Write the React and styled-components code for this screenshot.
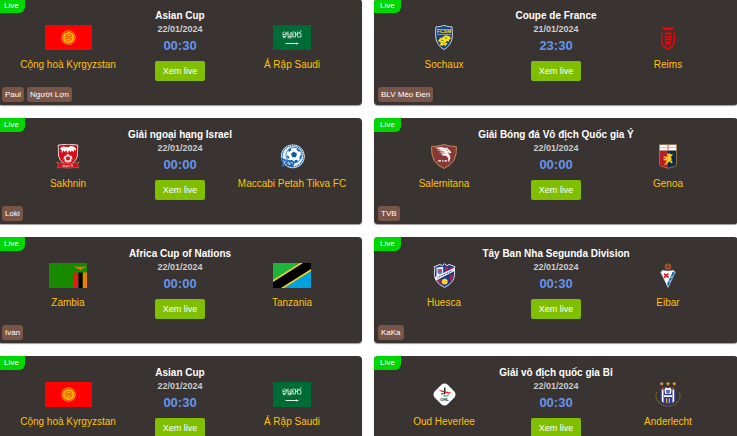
import styled, { createGlobalStyle } from "styled-components"

const GlobalStyle = createGlobalStyle`
  body {
    margin: 0;
    background: #fff;
    font-family: "Liberation Sans", Arial, sans-serif;
    overflow-x: hidden;
    scrollbar-width: none;
  }
`

const MatchGrid = styled.main`
  display: grid;
  grid-template-columns: repeat(2, minmax(0, 1fr));
  column-gap: 12px;
  row-gap: 13px;
  margin: -1px -1px 0 -2px;
`

const Card = styled.article`
  position: relative;
  display: flex;
  flex-direction: column;
  padding-bottom: 3px;
  border-radius: 4px;
  background: #393331;
  box-shadow: 0 1px 1px rgba(0, 0, 0, 0.4);
  overflow: hidden;
`

const LiveBadge = styled.span`
  position: absolute;
  top: 0;
  left: 0;
  padding: 0 6px;
  border-bottom-right-radius: 6px;
  background: #00d600;
  color: #fff;
  font-size: 8px;
  line-height: 14px;
`

const CardBody = styled.div`
  display: grid;
  grid-template-columns: repeat(3, minmax(0, 1fr));
  padding: 11px 14px 0;
`

const TeamBox = styled.div`
  display: flex;
  flex-direction: column;
  align-items: center;
  gap: 8px;
  padding-top: 15px;

  & svg {
    display: block;
    height: 25px;
  }
`

const TeamName = styled.span`
  color: #ffc107;
  font-size: 10px;
  line-height: 14px;
  white-space: nowrap;
`

const Info = styled.div`
  display: flex;
  flex-direction: column;
  align-items: center;
  white-space: nowrap;
  font-weight: bold;
`

const League = styled.h2`
  margin: 0;
  color: #fff;
  font-size: 10px;
  line-height: 12px;
`

const MatchDate = styled.span`
  color: #ccc;
  font-size: 9px;
  line-height: 15px;
`

const Kickoff = styled.span`
  color: #6495ed;
  font-size: 13px;
  line-height: 18px;
`

const WatchButton = styled.button`
  margin-top: 6px;
  padding: 0 8px;
  border: none;
  border-radius: 2px;
  background: #7fbf00;
  color: #fff;
  font-family: inherit;
  font-size: 9px;
  line-height: 20px;
  cursor: pointer;
`

const Tags = styled.div`
  display: flex;
  gap: 3px;
  padding: 6px 4px 0;
`

const Tag = styled.span`
  padding: 0 3px;
  border-radius: 3px;
  background: #795548;
  color: #fff;
  font-size: 8px;
  line-height: 15px;
`

const Kyrgyzstan = () => (
  <svg width="47" viewBox="0 0 47 25">
    <rect width="47" height="25" fill="#f00" />
    <circle cx="23.5" cy="12.5" r="6.6" fill="none" stroke="#ff8c00" strokeWidth="1.6" strokeDasharray="1.2 0.4" />
    <circle cx="23.5" cy="12.5" r="5.6" fill="#ffc400" />
    <circle cx="23.5" cy="12.5" r="3.6" fill="#ffa000" stroke="#f85a00" strokeWidth="0.8" />
    <path d="M20.8 11q2.7 1 5.4 3M26.2 11q-2.7 1-5.4 3" fill="none" stroke="#f33a00" strokeWidth="0.8" />
  </svg>
)

const SaudiArabia = () => (
  <svg width="38" viewBox="0 0 38 25">
    <rect width="38" height="25" fill="#006c35" />
    <g fill="none" stroke="#e4f0e9" strokeWidth="0.8">
      <path d="M10 7v4.5h3V8M11.5 6.5l2 3M15 6.5v5h3V7M16 9l3 3.5M20 6.5v5.5h2.5V7M21 6.5l2 2M24.5 6.5v5.5M26 7l2 1.5v3.5h-3M27 6h1.5M10 12.5l2.5.3M14.5 12.8h4M10 9.5h2M13.5 7l1.5 2M18 7.5l2 3M22.5 9.5h2M24.5 8h3" />
      <path d="M12.5 18.5h13" strokeWidth="1" />
      <path d="M23.5 17.5v2" />
    </g>
  </svg>
)

const Zambia = () => (
  <svg width="38" viewBox="0 0 38 25">
    <rect width="38" height="25" fill="#198a00" />
    <path d="M25 9.5h4.5V25H25z" fill="#de2010" />
    <path d="M29.5 9.5h4.3V25h-4.3z" fill="#000" />
    <path d="M33.8 9.5H38V25h-4.2z" fill="#ef7d00" />
    <path d="M25 2.8l4.8 1.4 1.5-1 1.2 1L37.5 3l-2.6 2.3-2 .2-1 2-1.2-1.4-1.8-.1z" fill="#ef7d00" />
  </svg>
)

const Tanzania = () => (
  <svg width="38" viewBox="0 0 38 25">
    <path d="M0 0h38L0 25z" fill="#1eb53a" />
    <path d="M38 0v25H0z" fill="#00a3dd" />
    <path d="M0 25v-8L27 0h11v8L11 25z" fill="#fcd116" />
    <path d="M0 25v-6L30 0h8v6L8 25z" fill="#000" />
  </svg>
)

const Sochaux = () => (
  <svg width="18" viewBox="0 0 18 25">
    <path d="M1 1.8Q5 2 9 .4q4 1.6 8 1.4.8 5.2.2 11.2Q16 20.5 9 24.6 2 20.5.8 13 .2 7 1 1.8z" fill="#174489" stroke="#f2f5fa" strokeWidth="0.8" />
    <text x="9" y="8" textAnchor="middle" fontSize="5" fontWeight="bold" fill="#ffe014">FCSM</text>
    <path d="M2 9.5h14" stroke="#dfe6f2" strokeWidth="0.5" />
    <path d="M3 16l2.2-3 2.5-.5 1-1.5 2.8-.7 3.4 1.2 1 2.2-1.8 1-.2 2-1.8-.6-2 1.4 2.4.8-2 2.8-2-1.4-2 1.4-2-1.8 2-1.6-1.8-.6z" fill="#ffe014" />
    <path d="M6 15l2.5 1M10 12.5l2 .8M8 18l1.5.6" stroke="#174489" strokeWidth="0.7" />
  </svg>
)

const Reims = () => (
  <svg width="14" viewBox="0 0 14 25">
    <g fill="none" stroke="#f50008">
      <path d="M.8 7.5V17c0 3.5 3 5.4 6.2 7 3.2-1.6 6.2-3.5 6.2-7V7.5" strokeWidth="1.5" />
      <path d="M9.8 10.2V8.2H4.6v3.6h5v2.6" strokeWidth="1.5" />
      <path d="M4.8 20.5v-6.2h4.7v2.6H5.5l4.3 3.8" strokeWidth="1.5" />
    </g>
    <path d="M2.6 5.4L1 1.2 4.4 3.2 5.2 1.2 7 3 8.8 1.2l.8 2L13 1.2l-1.6 4.2Q7 4.3 2.6 5.4z" fill="#f50008" />
  </svg>
)

const Sakhnin = () => (
  <svg width="24" viewBox="0 0 24 25">
    <path d="M2.2 1Q12-.6 21.8 1L21.4 12Q20 18 12 22 4 18 2.6 12z" fill="#d50d13" stroke="#fff" strokeWidth="0.8" />
    <path d="M4 4.5Q6 1.8 9 2.8t6-.8q4 .2 5.3 3.3l-.6 1.5-1.5-1.2-.6 3-1.7-2.3-1.2 2-1.7-2-1.2 3-1.7-3-1.4 1.6-1.5-1.6L6 9.5 5.5 6.3z" fill="#fff" />
    <circle cx="12" cy="14.5" r="4.4" fill="#f7dada" />
    <path d="M12 12.2l2.2 1.6-.8 2.5h-2.8l-.8-2.5zM9 10.7l2-.7-.2 1.2-1.6 1zM15 10.7l-2-.7.2 1.2 1.6 1zM7.7 15l1.4.8-.1 1.5zM16.3 15l-1.4.8.1 1.5zM10.6 18h2.8l-1.4 1z" fill="#d50d13" />
    <path d="M.7 18l3.8.7q7.5 1.6 15 0l3.8-.7-1.7 3 1.3 3-3.6-.4q-7.3 1.2-14.6 0L1.1 24l1.3-3z" fill="#cf1015" stroke="#e58f91" strokeWidth="0.4" />
    <path d="M7 20.7v1.8h1.4v-1.6M10 21v1.8h1.4V21M13 20.8v2M15 22.7v-1.8h1.5v1.6" fill="none" stroke="#fff" strokeWidth="0.6" />
  </svg>
)

const Maccabi = () => (
  <svg width="25" viewBox="0 0 25 25">
    <circle cx="12.8" cy="12.3" r="11.9" fill="#eaf3fb" />
    <circle cx="12.8" cy="12.3" r="10.6" fill="none" stroke="#1c70bd" strokeWidth="1.3" strokeDasharray="1.3 0.6" />
    <circle cx="13.8" cy="11.2" r="7.8" fill="#fff" stroke="#1965b3" strokeWidth="0.8" />
    <path d="M13.6 7.6l3.3 2-.8 3.7h-3.7l-1.5-3.2zM8 6.2l2.8-2.1.7 1.6-2.2 2.4zM17 4.2l3 2.2-.7 1.5-2.7-1.8zM20.3 11.4l1.4-.8-.8 4-1.8.2zM14.6 16.3l2.7-.5.5 1.7-3 1.4zM7 11.3l2 1.2.3 2.2-2-.6z" fill="#0d5bab" />
    <path d="M.8 13.5l7 2.7 4.2-.2 3 2-2 5.2-5-1.3-7.2.6 1.8-3z" fill="#1b67b4" />
    <path d="M3 16.3l2 3M6 16.5l-2.5 4M7 19l2-1v3l2-2.5 2 .8M5 21l2-.6" fill="none" stroke="#dcecfa" strokeWidth="0.8" />
  </svg>
)

const Salernitana = () => (
  <svg width="26" viewBox="0 0 26 25">
    <path d="M.6 2.6Q7 2.4 13 .6q6 1.8 12.4 2Q26 10 23 16.2 19.7 21.6 13 24.5 6.3 21.6 3 16.2 0 10 .6 2.6z" fill="#873735" stroke="#c69555" strokeWidth="0.9" />
    <path d="M4 3.8l7.2-.9 3.5 1.4 1.2-1.2.8 1.5 2.5 2.1 1.4 2-1.6.5-2.3-.9 2 2.7.8 3.2-1.3 2.5-1.5-.2.6-2.6-2.2-2-3.4-.4-2-1.7 2.6-.5-4.8-1.4 3.7-.2-5.5-1.6 3.8-.3z" fill="#f4ebe8" />
    <path d="M8 6.3l5 1.5M10 8.6l4 .8M15.5 5.7l1.5 1" stroke="#873735" strokeWidth="0.5" />
    <path d="M7 16h3v1.8H7zM11 16h1.5v1.8H11zM13.5 16H16v1.8h-2.5zM17 16h1.5v1.8H17z" fill="#d9c3bf" />
  </svg>
)

const Genoa = () => (
  <svg width="18" viewBox="0 0 18 25">
    <path d="M.5 6.5H9V24.3Q6 23.3 2.7 22.5.5 22 .5 20z" fill="#b71d27" />
    <path d="M17.5 6.5H9V24.3q3-1 6.3-1.8 2.2-.5 2.2-2.5z" fill="#092c4e" />
    <path d="M.5.8h17v5.7H.5z" fill="#fff" />
    <path d="M9 .8v5.7" stroke="#e2404b" strokeWidth="1" />
    <path d="M.5 3.6h17" stroke="#ee8c94" strokeWidth="0.8" />
    <path d="M.5.8h17V20q0 2-2.2 2.5Q12 23.3 9 24.3 6 23.3 2.7 22.5.5 22 .5 20z" fill="none" stroke="#b58b43" strokeWidth="0.7" />
    <path d="M7.5 8.7L9 10l2-1 .8 1.4 2-.6-.8 2.1-1.4.9 1.2 2-.6 1.8 1.3 1.2-.3 1.8-1.2-.5-1.5-1.6L9 18.8l-1.7 1.9-2.3-.2 2.3-2.3.2-2-2.6.4-.7-1.4 2.5-.8-2.3-.8.3-1.4 2.7.6 1.2-.7z" fill="#f6c51c" />
  </svg>
)

const Huesca = () => (
  <svg width="23" viewBox="0 0 23 25">
    <path d="M1 3.8l6-2.4 2 1.3L11.5.7 14 2.7l2-1.3 6 2.4-.9 1.7q1.7 7.5-1.7 12.7-2.7 4-7.9 6.2-5.2-2.2-7.9-6.2Q.2 13 1.9 5.5z" fill="#1d3d89" stroke="#f1f2f7" strokeWidth="0.9" />
    <path d="M12 3.4l2.7.4v5l-2.7 2zM17 4.6l2.7-.2.5 2-3.2 1.8zM4 17.2l3-2v5.2zM17 13l3-2-.7 4-2.3 4z" fill="#c81b3f" />
    <path d="M3.4 4.6l6.8-.9v6.8l-6.8 3.3z" fill="#e2e6f2" />
    <path d="M4.5 6h4.6v4.2L6.8 11.4 4.5 10z" fill="#5c80bd" />
    <path d="M5.5 7h2.6v2H5.5z" fill="#c93d55" />
    <path d="M1.7 14.3L21.8 4.5l-.3 3.6L3.1 17.4z" fill="#fff" />
    <path d="M4.3 14.9l15-7.3" stroke="#344b85" strokeWidth="1.1" strokeDasharray="1.2 0.6" />
    <path d="M7.5 16.4h2v6l-2-1.3z" fill="#c81b3f" />
    <circle cx="11.8" cy="18.6" r="2.9" fill="#ffd829" />
    <path d="M10 17.8l3.6 1.8" stroke="#c79c2b" strokeWidth="0.4" />
  </svg>
)

const Eibar = () => (
  <svg width="16" viewBox="0 0 16 25">
    <circle cx="8" cy="3.8" r="3.3" fill="#a4532a" />
    <path d="M5.3 3.8h5.4M8 .8v6" fill="none" stroke="#633115" strokeWidth="0.5" />
    <path d="M.6 9q1.2-.2 2-1.8 5.4 1.8 10.8 0 .8 1.6 2 1.8L8 24.5z" fill="#fff" stroke="#b9d2e6" strokeWidth="0.5" />
    <path d="M12.8 8.6l2.1.8L8.1 23.6l-1-2.5z" fill="#146bab" />
    <path d="M10.9 15.4l1.3-2.6M9.4 19l1-2" stroke="#fff" strokeWidth="0.7" />
    <path d="M4 10.7l4.5 4M8.4 10.7l-4.5 4" stroke="#e2182b" strokeWidth="1.8" />
  </svg>
)

const OudHeverlee = () => (
  <svg width="25" viewBox="0 0 25 25">
    <rect x="3.4" y="3.4" width="18.2" height="18.2" rx="4.5" transform="rotate(45 12.5 12.5)" fill="#fff" />
    <path d="M12.2 5.5l-.3 7 1.4-.6.2-6.4z" fill="#151515" />
    <path d="M6.5 7.8l12.8 3-2.2 1-7.6-2z" fill="#e22220" />
    <path d="M8.7 11.8l4-1.1-3 2z" fill="#151515" />
    <path d="M10.9 13.4q4 1.2 6.4-.9-2 3.2-6.4.9z" fill="#41ac49" stroke="#41ac49" strokeWidth="0.5" />
    <text x="12.5" y="19" textAnchor="middle" fontSize="4" fontWeight="bold" fill="#111">OHL</text>
  </svg>
)

const Anderlecht = () => (
  <svg width="26" viewBox="0 0 26 25">
    <path d="M6.7 0l.5 1.1 1.2.2-.9.8.2 1.2-1-.6-1.1.6.2-1.2-.8-.8 1.2-.2zM13 0l.5 1.1 1.2.2-.9.8.2 1.2-1-.6-1.1.6.2-1.2-.8-.8 1.2-.2zM19.3 0l.5 1.1 1.2.2-.9.8.2 1.2-1-.6-1.1.6.2-1.2-.8-.8 1.2-.2z" fill="#e4a72c" stroke="#e4a72c" strokeWidth="0.4" />
    <path d="M1.6 10Q-.4 16 3.8 20.2t9.2 4.1q5-.1 9.2-4.1t2.2-10.2" fill="none" stroke="#8a7334" strokeWidth="1.1" strokeDasharray="1.2 0.8" />
    <path d="M5.4 7.5h15.2V18q-1 3.4-7.6 5Q6.4 21.4 5.4 18z" fill="#2b3a99" />
    <path d="M6.8 6.5v12.8l1.7 1.6V6.5zM17.5 6.5v14.4l1.7-1.6V6.5zM9 13.3h8v1.8H9z" fill="#fff" />
    <path d="M9.4 7.5l1.4-2.2L13 6.3l2.2-1L16.6 7.5l-.7 4.6h-5.8z" fill="#edeef4" />
    <path d="M11 8h4l-.4 3-1.6 1-1.6-1z" fill="#5d6aa8" />
    <path d="M7.7 5.5v2.6M18.3 5.5v2.6" stroke="#dc2c35" strokeWidth="1.8" />
    <path d="M11 16.2h1.3v5l-1.3-.6zM13.8 16.2h1.3v4.4l-1.3.6z" fill="#d6a448" />
  </svg>
)

const asianCup = {
  league: "Asian Cup",
  date: "22/01/2024",
  time: "00:30",
  home: { name: "Cộng hoà Kyrgyzstan", Logo: Kyrgyzstan },
  away: { name: "Ả Rập Saudi", Logo: SaudiArabia },
}

const matches = [
  { ...asianCup, casters: ["Paul", "Người Lợn"] },
  {
    league: "Coupe de France",
    date: "21/01/2024",
    time: "23:30",
    home: { name: "Sochaux", Logo: Sochaux },
    away: { name: "Reims", Logo: Reims },
    casters: ["BLV Mèo Đen"],
  },
  {
    league: "Giải ngoại hạng Israel",
    date: "22/01/2024",
    time: "00:00",
    home: { name: "Sakhnin", Logo: Sakhnin },
    away: { name: "Maccabi Petah Tikva FC", Logo: Maccabi },
    casters: ["Loki"],
  },
  {
    league: "Giải Bóng đá Vô địch Quốc gia Ý",
    date: "22/01/2024",
    time: "00:00",
    home: { name: "Salernitana", Logo: Salernitana },
    away: { name: "Genoa", Logo: Genoa },
    casters: ["TVB"],
  },
  {
    league: "Africa Cup of Nations",
    date: "22/01/2024",
    time: "00:00",
    home: { name: "Zambia", Logo: Zambia },
    away: { name: "Tanzania", Logo: Tanzania },
    casters: ["Ivan"],
  },
  {
    league: "Tây Ban Nha Segunda Division",
    date: "22/01/2024",
    time: "00:30",
    home: { name: "Huesca", Logo: Huesca },
    away: { name: "Eibar", Logo: Eibar },
    casters: ["KaKa"],
  },
  { ...asianCup, casters: [] },
  {
    league: "Giải vô địch quốc gia Bỉ",
    date: "22/01/2024",
    time: "00:30",
    home: { name: "Oud Heverlee", Logo: OudHeverlee },
    away: { name: "Anderlecht", Logo: Anderlecht },
    casters: [],
  },
]

const Team = ({ name, Logo }) => (
  <TeamBox>
    <Logo />
    <TeamName>{name}</TeamName>
  </TeamBox>
)

const MatchCard = ({ match }) => (
  <Card>
    <LiveBadge>Live</LiveBadge>
    <CardBody>
      <Team {...match.home} />
      <Info>
        <League>{match.league}</League>
        <MatchDate>{match.date}</MatchDate>
        <Kickoff>{match.time}</Kickoff>
        <WatchButton type="button">Xem live</WatchButton>
      </Info>
      <Team {...match.away} />
    </CardBody>
    <Tags>
      {match.casters.map((caster) => (
        <Tag key={caster}>{caster}</Tag>
      ))}
    </Tags>
  </Card>
)

const App = () => (
  <>
    <GlobalStyle />
    <MatchGrid>
      {matches.map((match, i) => (
        <MatchCard key={i} match={match} />
      ))}
    </MatchGrid>
  </>
)

export default App
